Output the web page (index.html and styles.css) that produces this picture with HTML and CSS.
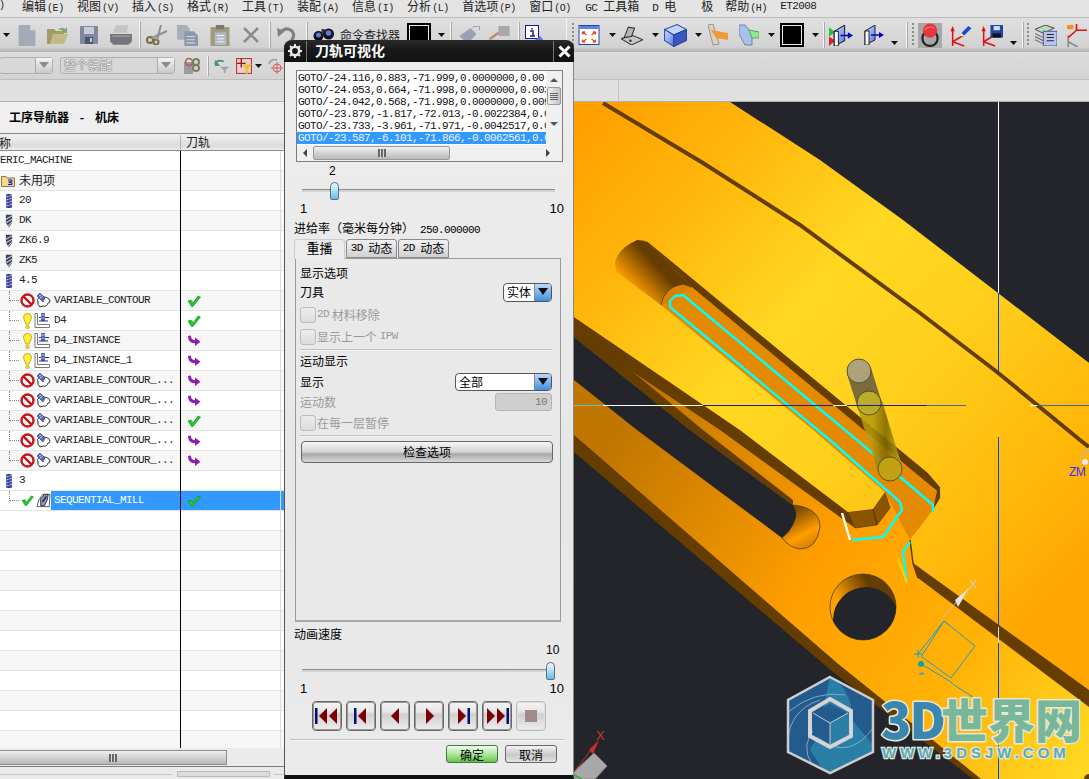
FILE: index.html
```html
<!DOCTYPE html>
<html lang="zh">
<head>
<meta charset="utf-8">
<title>刀轨可视化</title>
<link rel="stylesheet" href="styles.css">
</head>
<body>
<svg class="defs" aria-hidden="true">
  <defs>
    <linearGradient id="blueBox" x1="0" y1="0" x2="1" y2="1"><stop offset="0" stop-color="#cfe0ff"/><stop offset="1" stop-color="#5578d8"/></linearGradient>
    <symbol id="ico-no" viewBox="0 0 15 15"><circle cx="7.5" cy="7.5" r="6" fill="#fff" stroke="#c4161c" stroke-width="2.4"/><line x1="3.4" y1="3.4" x2="11.6" y2="11.6" stroke="#c4161c" stroke-width="2.4"/></symbol>
    <symbol id="ico-op" viewBox="0 0 15 15"><path d="M4 4 L9 4 Q14 5 14 8 Q14 10 12 10 Q11 14 7 13 L4 14 Q1 11 2 9 Q0 6 4 4Z" fill="#fff" stroke="#333" stroke-width="1"/><path d="M1 3 L4 0 L9 5 L7 9 Z" fill="#5566bb" stroke="#223377" stroke-width=".6"/><path d="M3 3 L5 2 M4 5 L6.500 3.500" stroke="#c8d0f0"/></symbol>
    <symbol id="ico-seq" viewBox="0 0 16 15"><path d="M1 14 L3 7 L7 1 L15 1 L14 14Z" fill="#fff" stroke="#555"/><path d="M5 13 L5 6 L9 1 L13 1 L12 7 L9 13Z" fill="#8a96c8" stroke="#334"/><path d="M7 9 L11 3" stroke="#223" stroke-width="1.500"/></symbol>
    <symbol id="ico-bulb" viewBox="0 0 9 16"><path d="M4.500 .5 Q8.500 .5 8.500 4 Q8.500 6 6 11 L3 11 Q.5 6 .5 4 Q.5 .5 4.500 .5Z" fill="#ffef3a" stroke="#b59a10" stroke-width=".8"/><circle cx="4.500" cy="14" r="1.800" fill="#f5dc20" stroke="#b59a10" stroke-width=".6"/></symbol>
    <symbol id="ico-prog" viewBox="0 0 16 15"><path d="M1 .5 H3.500 V11.500 H15.500 V14.500 H1Z" fill="#fff" stroke="#777"/><rect x="7" y="0" width="4" height="8" fill="#5260b8"/><path d="M5 4.500 H15 M5 8 H14" stroke="#203090"/><path d="M7 2 H11 M7 5 H11" stroke="#b8c0f0"/></symbol>
    <symbol id="ico-mill" viewBox="0 0 8 14"><rect x="1" y="0" width="6" height="14" rx="1" fill="#4a52b0"/><path d="M1 3 L7 1 M1 6 L7 4 M1 9 L7 7 M1 12 L7 10" stroke="#aab4ee"/><path d="M4 0 V14" stroke="#20286a" stroke-dasharray="2 1"/></symbol>
    <symbol id="ico-drill" viewBox="0 0 9 14"><path d="M1 0 H8 V9 L4.500 14 L1 9Z" fill="#3a3f55"/><path d="M1 5 L8 1 M1 9 L8 5 M3 13 L8 8" stroke="#c6cbe0" stroke-width="1.200"/></symbol>
    <symbol id="ico-folder" viewBox="0 0 14 12"><path d="M.5 1.500 H5 L6 3 H13.500 V11.500 H.5Z" fill="#f2dc8c" stroke="#8a7a3a"/><path d="M7 5 H11 V6.700 H8 V7.800 H11 V9.500 H7" fill="none" stroke="#1414e0" stroke-width="1"/></symbol>
    <symbol id="ico-check" viewBox="0 0 14 12"><path d="M1 6 L4 5 L6 8 L11 1 L13.500 2 L6 11.500 L4.500 11.500Z" fill="#22c82c" stroke="#0d8a1a" stroke-width=".6"/></symbol>
    <symbol id="ico-path" viewBox="0 0 14 12"><path d="M1 1 L3.800 .5 Q4 5 8 5.200 V2.500 L13.500 6.800 L8 11 V8.300 Q1 8.500 1 1Z" fill="#8a1fb0"/></symbol>
    <symbol id="ico-drop" viewBox="0 0 7 4"><path d="M0 0 H7 L3.500 4Z" fill="#111"/></symbol>
    <symbol id="ico-axes" viewBox="0 0 21 22"><g stroke="#e01010" stroke-width="1.500" fill="#e01010"><path d="M3 21 V5" fill="none"/><path d="M3 2 L5 7 H1Z" stroke="none"/><path d="M3 17 L13 11" fill="none"/><path d="M3 17 L14 21" fill="none"/></g></symbol>
  </defs>
</svg>

<div class="app">
  <nav class="menubar">
    <span class="menu"><span class="mn">)</span></span>
    <span class="menu">编辑<span class="mn">(E)</span></span>
    <span class="menu">视图<span class="mn">(V)</span></span>
    <span class="menu">插入<span class="mn">(S)</span></span>
    <span class="menu">格式<span class="mn">(R)</span></span>
    <span class="menu">工具<span class="mn">(T)</span></span>
    <span class="menu">装配<span class="mn">(A)</span></span>
    <span class="menu">信息<span class="mn">(I)</span></span>
    <span class="menu">分析<span class="mn">(L)</span></span>
    <span class="menu">首选项<span class="mn">(P)</span></span>
    <span class="menu">窗口<span class="mn">(O)</span></span>
    <span class="menu gap-gc"><span class="mono">GC</span><span class="m6">工具箱</span></span>
    <span class="menu gap-d"><span class="mono">D</span><span class="m6">电</span></span>
    <span class="menu gap-ji">极</span>
    <span class="menu">帮助<span class="mn">(H)</span></span>
    <span class="menu"><span class="mono">ET2008</span></span>
  </nav>

  <div class="toolbar">
    <div class="tb-left">
      <svg class="m3" width="7" height="4"><use href="#ico-drop"/></svg>
      <svg class="m8" width="18" height="21" viewBox="0 0 16 20"><path d="M0 0 H11 L16 5 V20 H0Z" fill="#a4aab8"/><path d="M11 0 L16 5 H11Z" fill="#d4d8e0"/></svg>
      <svg class="m11" width="21" height="20" viewBox="0 0 21 18"><path d="M0 3 H7 L9 5 H17 V18 H0Z" fill="#a49a68"/><path d="M3 18 L6 8 H21 L17 18Z" fill="#c4ba88"/><path d="M11 4 Q14 0 18 3 L20 1 V7 H14 L16 5 Q14 3 11 4Z" fill="#7fa878"/></svg>
      <svg class="m12" width="18" height="18" viewBox="0 0 18 18"><rect width="18" height="18" rx="1" fill="#8088a0"/><rect x="4" y="1" width="10" height="7" fill="#c8ccd4"/><rect x="5" y="11" width="8" height="7" fill="#50566a"/><rect x="10" y="12" width="2" height="4" fill="#c8ccd4"/></svg>
      <svg class="m11" width="24" height="20" viewBox="0 0 22 18"><path d="M6 0 H18 L16 7 H4Z" fill="#c4c4c8"/><path d="M1 8 H21 V15 L18 18 H4 L1 15Z" fill="#75757d"/><path d="M3 10 H19" stroke="#a8a8ae"/></svg>
      <span class="sep m6"></span>
      <svg class="m5" width="22" height="20" viewBox="0 0 22 20"><g fill="none" stroke="#7c6a42" stroke-width="2"><circle cx="4" cy="15" r="3"/><circle cx="10" cy="17" r="2.500"/></g><path d="M6 13 L21 6 M11 15 L15 0" stroke="#8a8f98" stroke-width="2"/></svg>
      <svg class="m9" width="21" height="21" viewBox="0 0 20 20"><path d="M0 0 H9 L12 3 V14 H0Z" fill="#a8aeba"/><path d="M7 6 H16 L20 10 V20 H7Z" fill="#8e96a8"/><path d="M9 11 H17 M9 14 H17 M9 17 H17" stroke="#d4d8e0"/></svg>
      <svg class="m12" width="20" height="21" viewBox="0 0 18 20"><rect y="2" width="18" height="18" fill="#a09a78"/><rect x="5" y="0" width="8" height="4" fill="#78787c"/><rect x="4" y="7" width="11" height="12" fill="#b4bac6"/><path d="M6 10 H13 M6 13 H13 M6 16 H13" stroke="#eceef2"/></svg>
      <svg class="m13" width="16" height="16" viewBox="0 0 16 16"><path d="M1 1 L15 15 M15 1 L1 15" stroke="#8a8a8a" stroke-width="2.500"/></svg>
      <span class="sep m10"></span>
      <svg class="m6" width="19" height="17" viewBox="0 0 19 17"><path d="M3 6 Q9 -1 15 4 Q19 9 13 16" fill="none" stroke="#808080" stroke-width="3"/><path d="M0 1 L8 4 L1 10Z" fill="#808080"/></svg>
      <span class="sep m10"></span>
      <svg class="m5" width="22" height="16" viewBox="0 0 21 16"><circle cx="5" cy="9" r="5" fill="#101018"/><circle cx="15" cy="7" r="5.500" fill="#101018"/><circle cx="5" cy="8" r="2.500" fill="#5c7ed8"/><circle cx="15" cy="6" r="2.800" fill="#5c7ed8"/><rect x="8" y="2" width="3" height="4" fill="#333"/></svg>
      <span class="toollabel m5">命令查找器</span>
      <span class="swatch m7"></span>
      <svg class="m7" width="7" height="4"><use href="#ico-drop"/></svg>
      <span class="sep m5"></span>
      <svg class="m7" width="21" height="18" viewBox="0 0 20 18"><path d="M0 10 L11 2 L17 8 L8 18Z" fill="#9aa0b8"/><path d="M13 1 L20 0 V4" fill="none" stroke="#90a0c0"/></svg>
      <svg class="m9" width="21" height="18" viewBox="0 0 18 16"><rect x="8" y="0" width="10" height="9" fill="#a8a8a8"/><path d="M0 12 L8 6" stroke="#c08a70" stroke-width="2"/><rect x="0" y="12" width="9" height="4" fill="#bdbdbd"/></svg>
      <span class="sep m8"></span>
      <svg class="m4" width="22" height="20" viewBox="0 0 20 20"><rect x=".5" y=".5" width="13" height="13" fill="#fff" stroke="#1616a0"/><path d="M7 3 V4.500 M5 6 H8 V11 H5 H10" stroke="#1616a0" stroke-width="1.500" fill="none"/><path d="M10 15 L15 11 L20 17 L15 20Z" fill="#5878d8"/></svg>
    </div>
    <div class="tb-right">
      <span class="grip m5"></span>
      <svg class="m4" width="22" height="20" viewBox="0 0 21 20"><rect x=".5" y=".5" width="20" height="19" fill="#fff" stroke="#2244b0"/><rect x="1" y="1" width="19" height="3" fill="#5a80e0"/><path d="M4 7 L8 10 M4 7 V9.500 M4 7 H6.500 M17 7 L13 10 M17 7 V9.500 M17 7 H14.500 M4 17 L8 14 M4 17 V14.500 M4 17 H6.500 M17 17 L13 14 M17 17 V14.500 M17 17 H14.500" stroke="#e84818" stroke-width="1.300" fill="none"/></svg>
      <svg class="m9" width="7" height="4"><use href="#ico-drop"/></svg>
      <svg class="m5" width="22" height="19" viewBox="0 0 21 18"><path d="M0 12 L11 9 L21 13 L10 18Z" fill="#c8c8c8" stroke="#333"/><path d="M3 11 L7 1 L13 2 L10 10Z" fill="#b4b4b4" stroke="#333"/><circle cx="9" cy="14" r="1.200" fill="#333"/></svg>
      <svg class="m9" width="7" height="4"><use href="#ico-drop"/></svg>
      <svg class="m5" width="23" height="23" viewBox="0 0 21 21"><path d="M.5 5 L12 .5 L20.500 5 L9 10Z" fill="#c4d6fa" stroke="#3050b8"/><path d="M.5 5 L9 10 V20.500 L.5 15Z" fill="url(#blueBox)" stroke="#3050b8"/><path d="M9 10 L20.500 5 V15 L9 20.500Z" fill="#3a58c0" stroke="#2a40a0"/></svg>
      <svg class="m8" width="7" height="4"><use href="#ico-drop"/></svg>
      <svg class="m6" width="20" height="22" viewBox="0 0 20 22"><path d="M0 1 L5 0 L11 20 L5 21Z" fill="#d8d2c0" stroke="#9a9484"/><path d="M3 6 L20 9 V16 L8 14Z" fill="#f09a38"/></svg>
      <svg class="m11" width="20" height="22" viewBox="0 0 20 20"><path d="M0 0 H6 L13 8 V20 L6 20 L0 9Z" fill="#a8c0ec" stroke="#7080a0"/><path d="M10 5 L20 7 V13 L13 13Z" fill="#8eea8e" stroke="#60a060"/></svg>
      <svg class="m9" width="7" height="4"><use href="#ico-drop"/></svg>
      <span class="swatch m5"></span>
      <svg class="m8" width="7" height="4"><use href="#ico-drop"/></svg>
      <span class="sep m4"></span>
      <svg class="m4" width="24" height="21" viewBox="0 0 23 20"><path d="M0 2 L6 7 L0 11Z" fill="#20c040"/><path d="M0 11 L6 15 L0 20Z" fill="#e02020"/><path d="M5 6 L15 0 V15 L5 20Z" fill="url(#blueBox)" stroke="#223"/><rect x="5" y="6" width="4" height="14" fill="#fff" stroke="#223"/><path d="M11 10 H20" stroke="#0000c8" stroke-width="1.500"/><path d="M23 10 L18 7 V13Z" fill="#0000c8"/></svg>
      <svg class="m11" width="21" height="20" viewBox="0 0 21 20"><path d="M1 6 L11 0 V15 L1 20Z" fill="url(#blueBox)" stroke="#223"/><rect x="1" y="6" width="4" height="14" fill="#fff" stroke="#223"/><path d="M7 10 H16" stroke="#0000c8" stroke-width="1.500"/><path d="M20 10 L15 7 V13Z" fill="#0000c8"/></svg>
      <svg class="m6 drop-low" width="7" height="4"><use href="#ico-drop"/></svg>
      <span class="sep m8"></span>
      <span class="grip m4"></span>
      <span class="active m4"><svg width="18" height="24" viewBox="0 0 16 22"><ellipse cx="8" cy="14" rx="7" ry="7" fill="none" stroke="#222" stroke-width="2"/><circle cx="8" cy="7" r="6.500" fill="#e8363e"/><path d="M3 6 Q8 2 12 5" fill="none" stroke="#f58888"/></svg></span>
      <svg class="m7" width="23" height="23" viewBox="0 0 21 22"><use href="#ico-axes"/><path d="M11 9 L18 2 L21 4 L14 11Z" fill="#2244d0"/><path d="M10 8 L14 11 L11 12Z" fill="#f4f0a0"/></svg>
      <svg class="m8" width="23" height="23" viewBox="0 0 22 22"><use href="#ico-axes"/><rect x="10" y="1" width="12" height="12" fill="#2244a0"/><rect x="13" y="2" width="6" height="4" fill="#cfe0ff"/><rect x="12" y="9" width="8" height="4" fill="#111"/></svg>
      <svg class="m7 drop-low" width="7" height="4"><use href="#ico-drop"/></svg>
      <span class="sep m5"></span>
      <span class="grip m3"></span>
      <svg class="m6" width="22" height="21" viewBox="0 0 21 20"><path d="M0 4 L10 0 L18 3 L8 8Z" fill="#b8e0b0" stroke="#556"/><path d="M0 8 L8 12 M0 11 L8 15 M0 14 L8 18" stroke="#667" fill="none"/><rect x="8" y="6" width="13" height="14" fill="#b8c4ea" stroke="#5060a0"/><path d="M11 9 H18 M11 12 H18 M11 15 H18" stroke="#223" /><path d="M10 9 H11 M10 12 H11 M10 15 H11" stroke="#f0c020"/></svg>
      <svg class="m8" width="22" height="23" viewBox="0 0 21 22"><path d="M3 22 V11 M3 17 L12 22" stroke="#888" stroke-width="1.500"/><path d="M3 13 L11 6 M11 6 H21 M11 6 V0" stroke="#e01010" stroke-width="1.500" fill="none"/><rect x="2" y="1" width="6" height="4" fill="#f09020"/></svg>
    </div>
  </div>

  <div class="toolbar2">
    <span class="combo combo-a"><span class="combo-arrow"></span></span>
    <span class="combo combo-b"><span class="combo-text">整个装配</span><span class="combo-arrow"></span></span>
    <svg class="m9" width="16" height="17" viewBox="0 0 16 17"><rect x="0" y="5" width="9" height="12" fill="#9a9aa0"/><circle cx="5" cy="5" r="3.500" fill="none" stroke="#b05a50" stroke-width="1.500"/><circle cx="12" cy="5" r="3" fill="none" stroke="#807868" stroke-width="2"/><circle cx="12" cy="11" r="3" fill="none" stroke="#807868" stroke-width="2"/></svg>
    <span class="sep m7 short"></span>
    <svg class="m5" width="15" height="17" viewBox="0 0 17 17"><path d="M1 7 Q4 1 11 4" fill="none" stroke="#4f8f70" stroke-width="2"/><path d="M1 2 V9 H7Z" fill="#4f8f70"/><path d="M7 10 H17 L13 14 V17 H11 V14Z" fill="#a0a4a8"/></svg>
    <svg class="m7" width="16" height="16" viewBox="0 0 15 15"><rect x=".5" y=".5" width="14" height="14" fill="#e4d0d0" stroke="#d03030"/><path d="M5 1 V9 M1 5 H9" stroke="#901818" stroke-width="1.300"/><path d="M6 6 H15 L11 10 V15 H9 V10Z" fill="#f0c020"/></svg>
    <svg class="m3" width="7" height="4"><use href="#ico-drop"/></svg>
    <svg class="m6" width="15" height="16" viewBox="0 0 15 16"><path d="M1 6 Q3 0 9 2" fill="none" stroke="#9a9a9a" stroke-width="1.500"/><circle cx="9" cy="10" r="4" fill="none" stroke="#d06060"/><path d="M9 4 V16 M3 10 H15" stroke="#d06060"/></svg>
  </div>

  <div class="band"><span class="band-cell"></span></div>

  <div class="workspace">
    <section class="navigator">
      <h2 class="nav-title">工序导航器 - 机床</h2>
      <div class="nav-head">
        <span class="head-name">称</span>
        <span class="head-path">刀轨</span>
      </div>
      <div class="rows">
        <div class="row"><span class="name mono root">GENERIC_MACHINE</span></div>
        <div class="row"><span class="name"><svg class="ico-l1f" width="14" height="12"><use href="#ico-folder"/></svg><span class="cjk">未用项</span></span></div>
        <div class="row"><span class="name"><svg class="ico-l1" width="8" height="14"><use href="#ico-mill"/></svg><span class="mono">20</span></span></div>
        <div class="row"><span class="name"><svg class="ico-l1" width="8" height="14"><use href="#ico-drill"/></svg><span class="mono">DK</span></span></div>
        <div class="row"><span class="name"><svg class="ico-l1" width="8" height="14"><use href="#ico-drill"/></svg><span class="mono">ZK6.9</span></span></div>
        <div class="row"><span class="name"><svg class="ico-l1" width="8" height="14"><use href="#ico-drill"/></svg><span class="mono">ZK5</span></span></div>
        <div class="row"><span class="name"><svg class="ico-l1" width="8" height="14"><use href="#ico-mill"/></svg><span class="mono">4.5</span></span></div>
        <div class="row"><span class="name"><i class="twig"></i><svg class="ico-st" width="15" height="15"><use href="#ico-no"/></svg><svg class="ico-op" width="15" height="15"><use href="#ico-op"/></svg><span class="mono">VARIABLE_CONTOUR</span></span><span class="path"><svg width="14" height="12"><use href="#ico-check"/></svg></span></div>
        <div class="row"><span class="name"><i class="twig"></i><svg class="ico-bulb" width="9" height="16"><use href="#ico-bulb"/></svg><svg class="ico-prog" width="16" height="15"><use href="#ico-prog"/></svg><span class="mono">D4</span></span><span class="path"><svg width="14" height="12"><use href="#ico-check"/></svg></span></div>
        <div class="row"><span class="name"><i class="twig"></i><svg class="ico-bulb" width="9" height="16"><use href="#ico-bulb"/></svg><svg class="ico-prog" width="16" height="15"><use href="#ico-prog"/></svg><span class="mono">D4_INSTANCE</span></span><span class="path"><svg width="14" height="12"><use href="#ico-path"/></svg></span></div>
        <div class="row"><span class="name"><i class="twig"></i><svg class="ico-bulb" width="9" height="16"><use href="#ico-bulb"/></svg><svg class="ico-prog" width="16" height="15"><use href="#ico-prog"/></svg><span class="mono">D4_INSTANCE_1</span></span><span class="path"><svg width="14" height="12"><use href="#ico-path"/></svg></span></div>
        <div class="row"><span class="name"><i class="twig"></i><svg class="ico-st" width="15" height="15"><use href="#ico-no"/></svg><svg class="ico-op" width="15" height="15"><use href="#ico-op"/></svg><span class="mono">VARIABLE_CONTOUR_...</span></span><span class="path"><svg width="14" height="12"><use href="#ico-path"/></svg></span></div>
        <div class="row"><span class="name"><i class="twig"></i><svg class="ico-st" width="15" height="15"><use href="#ico-no"/></svg><svg class="ico-op" width="15" height="15"><use href="#ico-op"/></svg><span class="mono">VARIABLE_CONTOUR_...</span></span><span class="path"><svg width="14" height="12"><use href="#ico-path"/></svg></span></div>
        <div class="row"><span class="name"><i class="twig"></i><svg class="ico-st" width="15" height="15"><use href="#ico-no"/></svg><svg class="ico-op" width="15" height="15"><use href="#ico-op"/></svg><span class="mono">VARIABLE_CONTOUR_...</span></span><span class="path"><svg width="14" height="12"><use href="#ico-check"/></svg></span></div>
        <div class="row"><span class="name"><i class="twig"></i><svg class="ico-st" width="15" height="15"><use href="#ico-no"/></svg><svg class="ico-op" width="15" height="15"><use href="#ico-op"/></svg><span class="mono">VARIABLE_CONTOUR_...</span></span><span class="path"><svg width="14" height="12"><use href="#ico-path"/></svg></span></div>
        <div class="row"><span class="name"><i class="twig"></i><svg class="ico-st" width="15" height="15"><use href="#ico-no"/></svg><svg class="ico-op" width="15" height="15"><use href="#ico-op"/></svg><span class="mono">VARIABLE_CONTOUR_...</span></span><span class="path"><svg width="14" height="12"><use href="#ico-path"/></svg></span></div>
        <div class="row"><span class="name"><svg class="ico-l1" width="8" height="14"><use href="#ico-mill"/></svg><span class="mono">3</span></span></div>
        <div class="row selected"><span class="name"><i class="twig"></i><svg class="ico-stc" width="13" height="11"><use href="#ico-check"/></svg><svg class="ico-seq" width="15" height="15"><use href="#ico-seq"/></svg><span class="mono sel-text">SEQUENTIAL_MILL</span></span><span class="path"><svg width="14" height="12"><use href="#ico-check"/></svg></span></div>
        <div class="row"></div><div class="row"></div><div class="row"></div><div class="row"></div>
        <div class="row"></div><div class="row"></div><div class="row"></div><div class="row"></div>
        <div class="row"></div><div class="row"></div><div class="row"></div><div class="row"></div>
      </div>
      <div class="hscroll"><span class="hthumb"><i class="gripper"></i></span></div>
      <div class="statusbar"><span class="status-seg status-a"></span><span class="status-seg status-b"></span><span class="status-seg status-c"></span></div>
    </section>

    <div class="viewport">
      <svg class="scene" width="804" height="677" viewBox="285 102 804 677">
        <defs>
          <linearGradient id="faceA" gradientUnits="userSpaceOnUse" x1="600" y1="110" x2="1089" y2="560">
            <stop offset="0" stop-color="#ffa000"/><stop offset=".2" stop-color="#ffb80c"/><stop offset=".42" stop-color="#ffd822"/><stop offset=".58" stop-color="#ffd21e"/><stop offset=".85" stop-color="#ffb80a"/><stop offset="1" stop-color="#ffa600"/>
          </linearGradient>
          <linearGradient id="faceB" gradientUnits="userSpaceOnUse" x1="590" y1="480" x2="1075" y2="780">
            <stop offset="0" stop-color="#c07600"/><stop offset=".42" stop-color="#ff9e00"/><stop offset=".72" stop-color="#ffb206"/><stop offset="1" stop-color="#ffd822"/>
          </linearGradient>
          <linearGradient id="cyl" gradientUnits="userSpaceOnUse" x1="620" y1="275" x2="652" y2="245">
            <stop offset="0" stop-color="#ff9e00"/><stop offset=".75" stop-color="#663d00"/>
          </linearGradient>
          <linearGradient id="slotEnd" gradientUnits="userSpaceOnUse" x1="795" y1="510" x2="815" y2="548">
            <stop offset="0" stop-color="#7a4a00"/><stop offset=".6" stop-color="#ff9e00"/><stop offset="1" stop-color="#c87a00"/>
          </linearGradient>
          <linearGradient id="holeWall" gradientUnits="userSpaceOnUse" x1="838" y1="600" x2="880" y2="575">
            <stop offset="0" stop-color="#ffa000"/><stop offset=".7" stop-color="#663d00"/>
          </linearGradient>
          <linearGradient id="lowTool" gradientUnits="userSpaceOnUse" x1="872" y1="420" x2="900" y2="420">
            <stop offset="0" stop-color="#b89a10"/><stop offset=".5" stop-color="#7a6400"/><stop offset="1" stop-color="#c4a618"/>
          </linearGradient>
          <clipPath id="holeClip"><circle cx="863" cy="607" r="33"/></clipPath>
          <clipPath id="hexClip"><path d="M830 677 L873 700 V752 L830 773 L788 752 V700Z"/></clipPath>
        </defs>
        <rect x="285" y="102" width="804" height="677" fill="#24252a"/>
        <path d="M574 435 L837 663 L981 779 H973 L833 672 L574 452Z" fill="#663d00"/>
        <path d="M560 102 H730 L1089 363 V779 H981 L837 663 L574 435 L560 425Z" fill="url(#faceB)"/>
        <path d="M574 333 L610 353 L703 430 L793 500 V505 L690 430 L574 337Z" fill="#663d00"/>
        <path d="M793 505 Q820 508 820 527 Q817 549 800 549 Q790 548 782 538Z" fill="url(#slotEnd)" stroke="#3a3020" stroke-width=".7"/>
        <path d="M574 337 L690 430 L793 505 Q798 514 795 520 Q792 530 782 538 L637 430 L574 380Z" fill="#24252a"/>
        <path d="M574 317 L740 430 L848 512 L855 528 L720 430 L574 333Z" fill="#663d00"/>
        <path d="M848 512 L855 528 L877 525 L890 508 L885 492 L873 509Z" fill="#8a5500" stroke="#4a3000" stroke-width=".6"/>
        <path d="M873 509 L877 525" stroke="#4a3000"/>
        <path d="M660 306 L692 287 L868 430 L940 495 L933 510 L910 540 L885 492Z" fill="#e48a00"/>
        <path d="M692 287 L925 481 L937 491 L933 510 L940 498 L940 487 L928 473 L648 242Z" fill="#663d00"/>
        <path d="M615 263 Q618 248 637 240 L648 242 L692 287 Q670 285 661 305 L617 272Z" fill="url(#cyl)"/>
        <path d="M661 305 Q664 287 683 284 L692 287" fill="#d88200" stroke="#3a3020" stroke-width=".7"/>
        <path d="M574 102 H730 L820 160 L903 220 L998 293 L1089 363 V690 L913 563 L910 540 L933 510 L941 498 L940 487 L928 473 L648 242 Q642 239 637 240 Q618 248 615 263 L617 272 L661 305 L813 430 L885 492 L873 509 L848 512 L740 430 L574 317Z" fill="url(#faceA)"/>
        <path d="M603 103 L703 163 L800 225 L920 313 L997 372 L1080 440 L1089 447" fill="none" stroke="#663d00" stroke-width="4"/>
        <path d="M913 563 L1089 690 V707 L918 578Z" fill="#663d00"/>
        <path d="M910 540 L913 563 L918 578" fill="none" stroke="#663d00" stroke-width="1.500"/>
        <circle cx="1089" cy="779" r="5" fill="#663d00"/>

        <circle cx="863" cy="607" r="33" fill="url(#holeWall)" stroke="#3a3020" stroke-width=".7"/>
        <circle cx="866" cy="620" r="33" fill="#24252a" clip-path="url(#holeClip)"/>

        <g fill="none" stroke-linejoin="round">
          <path d="M670 307 V301 L675 296 L683 295 L857 440 L933 505 V512 M670 307 L830 440 L900 502 L902 510 L883 537 L852 540" stroke="#00ffff" stroke-width="2.400"/>
          <path d="M842 513 L850 540" stroke="#fff" stroke-width="2.400"/>
          <path d="M910 542 L903 552 L907 583" stroke="#00ffff" stroke-width="2.400"/>
          <path d="M898 558 L907 583" stroke="#ffcc00" stroke-width="2.400"/>
        </g>

        <path d="M847 374 L871 368 L882 403 L858 409Z" fill="#7c6c3a"/>
        <path d="M858 409 L882 401 L902 466 L878 472Z" fill="url(#lowTool)" opacity=".85"/>
        <circle cx="890" cy="469" r="12" fill="#c0a214" stroke="#4a4020" stroke-width=".8"/>
        <circle cx="869" cy="403" r="12" fill="#b9ad28" stroke="#3c3c30" stroke-width=".8"/>
        <circle cx="859" cy="371" r="12" fill="#ada27a" stroke="#3c3c30" stroke-width=".8"/>

        <g stroke-width="1">
          <path d="M574 405.500 H603" stroke="#5ac0c0"/>
          <path d="M603 405.500 H703" stroke="#fff"/>
          <path d="M703 405.500 H927" stroke="#221a90"/>
          <path d="M833 405.500 H847" stroke="#f4f4e0"/>
          <path d="M927 405.500 H966" stroke="#3a6aa0"/>
          <path d="M1037 405.500 H1089" stroke="#3a6aa0"/>
          <path d="M1030 405.500 H1037" stroke="#fff"/>
          <path d="M998.500 102 V293" stroke="#fff"/>
          <path d="M998.500 293 V373" stroke="#0a40ff"/>
          <path d="M998.500 437 V627" stroke="#0a40ff"/>
          <path d="M998.500 627 V643" stroke="#d8e8c0"/>
          <path d="M998.500 643 V779" stroke="#0a40ff"/>
        </g>

        <g fill="none" stroke="#1f9ccc" stroke-width="1">
          <path d="M918 654 L944 621 L975 646 L951 678 L922 657"/>
          <path d="M921 657 L944 621 L949 625 M923 665 L951 682 L954 685 L973 697"/>
          <path d="M918 650 V658 M914 654 H922"/>
          <path d="M921 672 L924 674 H919"/>
        </g>
        <circle cx="921" cy="664" r="3" fill="#10a0a8"/>
        <path d="M942 618 L960 598" stroke="#c8c8c8" stroke-width="1"/>
        <path d="M969 588 L958 607 L955 600Z" fill="#e4e4e4"/>
        <text class="wcs-x" x="969" y="589">X</text>
        <text class="zm" x="1069" y="476">ZM</text>
        <path d="M1088 448 L1080 456 L1085 462 H1089 M1089 450 L1085 456" fill="none" stroke="#b0b8c8"/>
        <circle cx="1085" cy="462" r="3" fill="#e8e8f0"/>

        <path d="M574 779 V772 L594 753 L607 766 L595 779Z" fill="#a8a8a8" stroke="#888"/>
        <path d="M574 772 L594 746" stroke="#c83030" stroke-width="1"/>
        <path d="M599 740 L589 750 L593 754Z" fill="#c83030"/>
        <text class="triad-x" x="596" y="740">X</text>
        <path d="M574 775 L582 779" stroke="#30b030" stroke-width="1.500"/>

        <g class="logo">
          <path d="M830 677 L873 700 V752 L830 773 L788 752 V700Z" fill="#245b8e"/>
          <g clip-path="url(#hexClip)">
            <path d="M830 677 Q853 690 852 720 L873 745 V760 L830 780 L810 750 L818 735 Z" fill="#2a7fa6"/>
            <path d="M788 712 Q815 690 845 695 M788 740 Q790 710 820 700 M812 765 Q800 745 815 728 M873 728 Q850 760 820 740" fill="none" stroke="#9ab8cc" stroke-width=".8"/>
          </g>
          <path d="M830 677 L873 700 V752 L830 773 L788 752 V700Z" fill="none" stroke="#cdcdcd" stroke-width="2.500"/>
          <path d="M830 699 L851 711 V736 L830 747 L810 736 V711Z" fill="none" stroke="#d4d4d4" stroke-width="4"/>
          <path d="M813 713 L830 704 L848 713 L830 723Z" fill="#245b8e"/>
          <path d="M813 713 L830 723 V744 L813 734Z" fill="#245b8e"/>
          <path d="M830 723 L848 713 V734 L830 744Z" fill="#2a7fa6"/>
          <path d="M813 713 L830 723 L848 713 M830 723 V744" fill="none" stroke="#c4c8cc" stroke-width="1"/>
          <text class="wm-big wm-3d" x="881" y="739">3D</text>
          <text class="wm-big wm-cn" x="941" y="738">世界网</text>
          <text class="wm-url" x="882" y="758">WWW.3DSJW.COM</text>
        </g>
      </svg>
    </div>
  </div>
</div>

<section class="dialog">
  <header class="titlebar">
    <svg class="gear" width="14" height="14" viewBox="0 0 14 14"><circle cx="7" cy="7" r="4.200" fill="none" stroke="#e8e8e8" stroke-width="2.600"/><path d="M7 0 V2 M7 12 V14 M0 7 H2 M12 7 H14 M2 2 L3.500 3.500 M10.500 10.500 L12 12 M2 12 L3.500 10.500 M10.500 3.500 L12 2" stroke="#e8e8e8" stroke-width="2"/></svg>
    <h1 class="dlg-title">刀轨可视化</h1>
    <button class="close" aria-label="关闭"><svg width="13" height="13" viewBox="0 0 13 13"><path d="M1.500 1.500 L11.500 11.500 M11.500 1.500 L1.500 11.500" stroke="#fff" stroke-width="3"/></svg></button>
  </header>

  <div class="listbox">
    <div class="lines mono">
      <div class="line">GOTO/-24.116,0.883,-71.999,0.0000000,0.00</div>
      <div class="line">GOTO/-24.053,0.664,-71.998,0.0000000,0.003</div>
      <div class="line">GOTO/-24.042,0.568,-71.998,0.0000000,0.009</div>
      <div class="line">GOTO/-23.879,-1.817,-72.013,-0.0022384,0.0</div>
      <div class="line">GOTO/-23.733,-3.961,-71.971,-0.0042517,0.0</div>
      <div class="line line-sel">GOTO/-23.587,-6.101,-71.866,-0.0062561,0.0</div>
    </div>
    <div class="vbar">
      <span class="arrow-up"></span>
      <span class="vthumb"><i></i><i></i><i></i><i></i></span>
      <span class="arrow-down"></span>
    </div>
    <div class="hbar">
      <span class="arrow-left"></span>
      <span class="hbar-thumb"><i class="gripper"></i></span>
      <span class="arrow-right"></span>
    </div>
  </div>

  <div class="s-val s-val-2">2</div>
  <div class="track"><span class="knob knob-a"></span></div>
  <div class="s-range"><span>1</span><span>10</span></div>
  <div class="feed">进给率（毫米每分钟）<span class="mono feed-num">250.000000</span></div>

  <div class="tabs">
    <span class="tab tab-on">重播</span>
    <span class="tab"><span class="mono">3D</span> 动态</span>
    <span class="tab"><span class="mono">2D</span> 动态</span>
  </div>
  <div class="tabpanel">
    <div class="p-row p-h1">显示选项</div>
    <div class="p-row p-sel"><span>刀具</span><span class="select sel-a">实体<i class="sel-btn"></i></span></div>
    <div class="p-row p-chk off"><i class="cb"></i><span class="mono">2D</span>&nbsp;材料移除</div>
    <div class="p-row p-chk off"><i class="cb"></i>显示上一个&nbsp;<span class="mono">IPW</span></div>
    <hr class="rule">
    <div class="p-row p-h2">运动显示</div>
    <div class="p-row p-sel2"><span>显示</span><span class="select sel-b">全部<i class="sel-btn"></i></span></div>
    <div class="p-row p-num off"><span>运动数</span><span class="numbox mono">10</span></div>
    <div class="p-row p-chk off"><i class="cb"></i>在每一层暂停</div>
    <hr class="rule">
    <button class="wide-btn">检查选项</button>
  </div>

  <div class="speed-label">动画速度</div>
  <div class="s-val s-val-10">10</div>
  <div class="track"><span class="knob knob-b"></span></div>
  <div class="s-range"><span>1</span><span>10</span></div>

  <div class="player">
    <button class="pbtn"><svg width="24" height="18" viewBox="0 0 24 18"><rect x="0" y="1" width="2.500" height="16" fill="#00107a"/><path d="M4 9 L12 1 V17Z M14 9 L22 1 V17Z" fill="#7c0000"/></svg></button>
    <button class="pbtn"><svg width="14" height="18" viewBox="0 0 14 18"><rect x="0" y="1" width="2.500" height="16" fill="#00107a"/><path d="M4 9 L12 1 V17Z" fill="#7c0000"/></svg></button>
    <button class="pbtn"><svg width="9" height="18" viewBox="0 0 9 18"><path d="M0 9 L8 1 V17Z" fill="#7c0000"/></svg></button>
    <button class="pbtn"><svg width="9" height="18" viewBox="0 0 9 18"><path d="M9 9 L1 1 V17Z" fill="#7c0000"/></svg></button>
    <button class="pbtn"><svg width="14" height="18" viewBox="0 0 14 18"><path d="M10 9 L2 1 V17Z" fill="#7c0000"/><rect x="11.500" y="1" width="2.500" height="16" fill="#00107a"/></svg></button>
    <button class="pbtn"><svg width="24" height="18" viewBox="0 0 24 18"><path d="M10 9 L2 1 V17Z M20 9 L12 1 V17Z" fill="#7c0000"/><rect x="21.500" y="1" width="2.500" height="16" fill="#00107a"/></svg></button>
    <button class="pbtn pbtn-off"><svg width="12" height="12" viewBox="0 0 12 12"><rect width="12" height="12" fill="#a08a8a"/></svg></button>
  </div>
  <hr class="rule-b">
  <div class="actions">
    <button class="act act-ok">确定</button>
    <button class="act">取消</button>
  </div>
</section>
</body>
</html>
```

FILE: styles.css
```css
* { box-sizing: border-box; }
html, body { margin: 0; padding: 0; }
body {
  position: relative;
  width: 1089px;
  height: 779px;
  overflow: hidden;
  background: #e2e2e2;
  color: #000;
  font: 12px/1.2 "Noto Sans CJK SC", "Liberation Sans", sans-serif;
}
svg { display: block; flex: none; }
.defs { position: absolute; width: 0; height: 0; }
h1, h2 { margin: 0; font-size: inherit; }
button { font: inherit; color: inherit; padding: 0; margin: 0; }
hr { margin: 0; border: 0; }

.mono {
  font-family: "Liberation Mono", "DejaVu Sans Mono", monospace;
  font-size: 11px;
  letter-spacing: -.6px;
}

.m2 { margin-left: 2px; } .m3 { margin-left: 3px; } .m4 { margin-left: 4px; }
.m5 { margin-left: 5px; } .m6 { margin-left: 6px; } .m7 { margin-left: 7px; }
.m8 { margin-left: 8px; } .m9 { margin-left: 9px; } .m10 { margin-left: 10px; }
.m11 { margin-left: 11px; } .m12 { margin-left: 12px; } .m13 { margin-left: 13px; }

.app { display: flex; flex-direction: column; width: 1089px; height: 779px; }

/* menu */
.menubar {
  display: flex;
  align-items: flex-start;
  flex: none;
  height: 18px;
  gap: 12px;
  padding-top: 0;
  margin-left: -1px;
  background: #e4e4e4;
  border-bottom: 1px solid #bcbcbc;
  line-height: 12px;
  white-space: nowrap;
  color: #222;
}
.menu { display: flex; flex: none; align-items: baseline; }
.mn {
  display: block;
  width: 19px;
  padding-left: 1px;
  font: 10px/12px "Liberation Mono", monospace;
  letter-spacing: -.4px;
  white-space: nowrap;
}
.menu:first-child .mn { width: 11px; padding-left: 0; }
.gap-gc { margin-left: 1px; }
.gap-d { margin-left: 1px; }
.gap-ji { margin-left: 13px; }

/* toolbars */
.toolbar {
  display: flex;
  flex: none;
  height: 34px;
  background: linear-gradient(#e0e0e0, #d2d2d2 85%, #b0b0b0);
}
.tb-left { display: flex; align-items: center; width: 566px; flex: none; }
.tb-right {
  display: flex;
  align-items: center;
  flex: none;
  border-left: 1px solid #f4f4f4;
}
.sep { display: block; flex: none; height: 26px; background: #f4f4f4; border-right: 1px solid #a8a8a8; width: 2px; }
.sep.short { height: 20px; }
.grip {
  display: block;
  flex: none;
  width: 2px;
  height: 24px;
  background: repeating-linear-gradient(#8c8c8c 0 2px, transparent 2px 4px);
}
.drop-low { align-self: flex-end; margin-bottom: 7px; }
.active { display: block; flex: none; width: 24px; height: 25px; padding: 0 3px; background: #a8a8a8; }
.toollabel { display: block; flex: none; color: #222; white-space: nowrap; width: 60px; }
.swatch { display: block; flex: none; width: 24px; height: 24px; background: #000; border: 2px solid #000; outline: 1px solid #e8e8e8; outline-offset: -3px; }

.toolbar2 {
  display: flex;
  align-items: center;
  flex: none;
  height: 28px;
  background: linear-gradient(#dcdcdc, #d4d4d4);
  border-bottom: 1px solid #bdbdbd;
}
.combo {
  display: flex;
  flex: none;
  align-items: center;
  justify-content: space-between;
  height: 17px;
  border: 1px solid #b0b0b0;
  border-radius: 3px;
  background: #d8d8d8;
  padding-left: 3px;
}
.combo-a { width: 54px; margin-left: -1px; justify-content: flex-end; padding-left: 0; }
.combo-b { width: 115px; margin-left: 7px; }
.combo-text { color: #eee; font-size: 12px; text-shadow: 0 0 1px #555, 0 0 1px #555; }
.combo-arrow {
  display: block;
  width: 17px;
  height: 15px;
  border-left: 1px solid #aaa;
  background: linear-gradient(#f4f4f4, #c8c8c8);
  position: relative;
}
.combo-arrow::after {
  content: "";
  position: absolute;
  left: 3px;
  top: 4px;
  border: 5px solid transparent;
  border-top: 6px solid #8c8c8c;
  border-bottom: 0;
}

.band {
  flex: none;
  height: 22px;
  display: flex;
  justify-content: flex-end;
  background: #e0e0e0;
  border-bottom: 1px solid #b0b0b0;
}
.band-cell { display: block; width: 471px; border-left: 1px solid #c4c4c4; }

.workspace { display: flex; flex: 1; min-height: 0; }

/* navigator */
.navigator {
  display: flex;
  flex-direction: column;
  flex: none;
  width: 285px;
  overflow: hidden;
  background: #ececec;
  border-right: 1px solid #7c7c7c;
}
.nav-title {
  flex: none;
  height: 31px;
  padding: 7px 0 0 9px;
  font-weight: 700;
  font-size: 12px;
  line-height: 16px;
  background: #efefef;
  word-spacing: 8px;
}
.nav-head {
  display: flex;
  flex: none;
  height: 18px;
  align-items: center;
  background: linear-gradient(#f2f2f2, #dcdcdc 75%, #ededed);
  border-top: 1px solid #8a8a8a;
  border-bottom: 1px solid #8a8a8a;
  color: #222;
}
.head-name { width: 182px; margin-left: -1px; border-right: 1px solid #b4b4b4; line-height: 15px; }
.head-path { padding-left: 5px; }

.rows { position: relative; flex: none; height: 597px; overflow: hidden; background: #fff; }
.rows::after {
  content: "";
  position: absolute;
  left: 180px; top: 0; bottom: 0;
  width: 1px;
  background: #000;
}
.rows::before {
  content: "";
  position: absolute;
  left: 280px; top: 0; bottom: 0;
  width: 1px;
  background: #dcdcdc;
}
.row {
  display: flex;
  height: 20px;
  align-items: center;
  background: #fff;
  border-bottom: 1px solid #e4e4e4;
  color: #222;
}
.row:nth-child(even) { background: #f6f6f6; }
.name { display: flex; align-items: center; width: 181px; height: 100%; flex: none; white-space: nowrap; overflow: hidden; }
.root { margin-left: -18px; width: 199px; }
.path { display: block; padding-left: 6px; }
.cjk { font-size: 12px; }
.ico-l1 { margin: 0 6px 0 5px; }
.ico-l1f { margin: 0 4px 0 1px; }
.twig {
  display: block;
  flex: none;
  width: 10px;
  height: 10px;
  margin: 0 0 10px 9px;
  border-left: 1px dotted #888;
  border-bottom: 1px dotted #888;
}
.ico-st { margin-left: 1px; }
.ico-stc { margin: 0 2px; }
.ico-op { margin: 0 3px 0 1px; }
.ico-bulb { margin: 0 0 0 4px; }
.ico-prog { margin: 0 4px 0 2px; }
.selected { background: transparent !important; }
.selected .path { background: #3399ff; flex: 1; height: 100%; display: flex; align-items: center; }
.sel-text { background: #3399ff; color: #fff; align-self: stretch; flex: 1; line-height: 19px; padding-left: 3px; }

.hscroll { flex: none; height: 16px; margin-top: 2px; background: #ebebeb; }
.hthumb {
  display: flex;
  justify-content: center;
  align-items: center;
  width: 227px;
  height: 15px;
  border: 1px solid #8e8e8e;
  border-left: 0;
  background: linear-gradient(#eeeeee, #d4d4d4 50%, #b8b8b8);
}
.gripper {
  display: block;
  width: 8px;
  height: 8px;
  background: repeating-linear-gradient(90deg, #666 0 2px, #ddd 2px 3px);
}
.statusbar {
  flex: 1;
  display: flex;
  align-items: center;
  background: #eaeaea;
  border-top: 1px solid #7c7c7c;
  padding-top: 2px;
}
.status-seg { display: block; height: 1px; background: #c8c8c8; }
.status-a { width: 172px; }
.status-b { width: 93px; height: 6px; margin-left: 5px; border: 1px solid #bbb; background: #dedede; }
.status-c { width: 10px; margin-left: 4px; }

.viewport { flex: 1; min-width: 0; overflow: hidden; background: #24252a; }
.wcs-x { font: 13px "Liberation Sans", sans-serif; fill: #d8c8b0; }
.triad-x { font: 13px "Liberation Sans", sans-serif; fill: #c83a3a; }
.zm { font: 12px "Liberation Sans", sans-serif; fill: #3030ff; letter-spacing: -.5px; }
.wm-big {
  font-family: "Noto Sans CJK SC", sans-serif;
  font-weight: 900;
  stroke: #e8e8d8;
  stroke-width: 3px;
  paint-order: stroke;
  stroke-linejoin: round;
}
.wm-3d { font-size: 50px; fill: #3a86ae; letter-spacing: -2px; }
.wm-cn { font-size: 47px; fill: #79b79b; }
.wm-url {
  font: 700 15px "Liberation Sans", sans-serif;
  fill: #63a8b0;
  stroke: #dfe8e0;
  stroke-width: 2.5px;
  paint-order: stroke;
  letter-spacing: 4px;
}

/* dialog window */
.dialog {
  position: absolute;
  left: 284px;
  top: 40px;
  width: 290px;
  height: 739px;
  display: flex;
  flex-direction: column;
  background: linear-gradient(#eeeeee, #e6e6e6 60%, #ebebeb);
  border-right: 1px solid #888;
  border-bottom: 4px solid #111;
  border-left: 1px solid #555;
  border-radius: 8px 8px 0 0;
}
.titlebar {
  display: flex;
  align-items: center;
  flex: none;
  height: 22px;
  margin: 0 -1px;
  background: linear-gradient(#2a2a2a, #1a1a1a 40%, #111);
  border-radius: 8px 8px 0 0;
  color: #fff;
}
.gear { margin-left: 4px; }
.dlg-title {
  flex: 1;
  height: 21px;
  margin-left: 4px;
  padding-left: 8px;
  border-left: 1px solid #777;
  font-weight: 700;
  font-size: 14px;
  line-height: 18px;
}
.close {
  display: flex;
  align-items: center;
  justify-content: center;
  width: 21px;
  height: 21px;
  background: transparent;
  border: 0;
  border-left: 1px solid #777;
}

.listbox {
  display: grid;
  grid-template-columns: 1fr 16px;
  grid-template-rows: 74px 1fr;
  flex: none;
  width: 267px;
  height: 92px;
  margin: 8px 0 0 11px;
  background: #fff;
  border: 1px solid #7c7c7c;
}
.lines { padding-top: 1px; overflow: hidden; white-space: nowrap; }
.line { height: 12px; line-height: 12px; padding-left: 1px; color: #111; }
.line-sel { background: #3399ff; color: #e8f4ff; }
.vbar { display: flex; flex-direction: column; align-items: center; background: #f0f0f0; padding-top: 7px; }
.arrow-up { display: block; border: 4px solid transparent; border-bottom: 4px solid #555; border-top: 0; }
.arrow-down { display: block; margin-top: 17px; border: 4px solid transparent; border-top: 4px solid #555; border-bottom: 0; }
.vthumb {
  display: flex;
  flex-direction: column;
  justify-content: center;
  align-items: center;
  gap: 1px;
  width: 14px;
  height: 18px;
  margin-top: 5px;
  border: 1px solid #999;
  background: linear-gradient(90deg, #f0f0f0, #c4c4c4);
  border-radius: 2px;
}
.vthumb i { display: block; width: 8px; height: 1px; background: #666; }
.hbar {
  grid-column: 1 / 3;
  display: flex;
  align-items: center;
  background: #f0f0f0;
  padding: 0 4px 0 6px;
}
.arrow-left { display: block; border: 4px solid transparent; border-right: 4px solid #444; border-left: 0; }
.hbar-thumb {
  display: flex;
  justify-content: center;
  align-items: center;
  width: 137px;
  height: 14px;
  margin-left: 6px;
  border: 1px solid #999;
  border-radius: 2px;
  background: linear-gradient(#f0f0f0, #d4d4d4 50%, #b8b8b8);
}
.arrow-right { display: block; margin-left: auto; border: 4px solid transparent; border-left: 4px solid #444; border-right: 0; margin-right: 8px; }

.s-val { flex: none; height: 18px; line-height: 18px; font-family: "Liberation Sans", sans-serif; }
.s-val-2 { margin-left: 44px; }
.s-val-10 { height: 17px; line-height: 15px; margin-left: 261px; }
.track {
  flex: none;
  width: 253px;
  height: 22px;
  margin-left: 17px;
  padding-top: 2px;
  background: linear-gradient(transparent 9px, #8c8c8c 9px, #8c8c8c 10px, #d4d4d4 10px, #d4d4d4 12px, transparent 12px);
  border-radius: 2px;
}
.knob {
  display: block;
  width: 9px;
  height: 18px;
  border: 1px solid #667;
  border-radius: 5px 5px 2px 2px;
  background: linear-gradient(#f4fbff, #b8e4fa 40%, #5cc0f0);
}
.knob-a { margin-left: 28px; }
.knob-b { margin-left: 244px; }
.s-range { display: flex; justify-content: space-between; flex: none; width: 264px; height: 16px; margin-left: 15px; line-height: 14px; font-family: "Liberation Sans", sans-serif; font-size: 13px; }
.feed { flex: none; height: 20px; margin: 1px 0 0 9px; line-height: 18px; white-space: nowrap; }
.feed-num { margin-left: 6px; }

.tabs { display: flex; flex: none; height: 19px; margin-left: 9px; gap: 1px; position: relative; z-index: 1; }
.tab {
  display: flex;
  align-items: center;
  justify-content: center;
  gap: 3px;
  width: 51px;
  height: 19px;
  white-space: pre;
  border: 1px solid #8a8a8a;
  border-radius: 3px 3px 0 0;
  background: linear-gradient(#f2f2f2, #d0d0d0);
}
.tab-on { height: 20px; padding-bottom: 3px; border-color: #ccc; border-bottom: 0; background: #ececec; font-size: 13px; }
.tabpanel {
  flex: none;
  width: 266px;
  height: 364px;
  margin-left: 10px;
  padding: 4px 8px 0 4px;
  background: #e9e9e9;
  border: 1px solid #9a9a9a;
  border-bottom: 2px solid #a8a8a8;
}
.p-row { display: flex; align-items: center; white-space: pre; }
.p-h1 { height: 20px; }
.p-sel, .p-sel2, .p-num { justify-content: space-between; }
.p-sel { height: 19px; margin-bottom: 2px; }
.p-chk { height: 22px; }
.off { color: #9a9a9a; }
.cb {
  display: block;
  flex: none;
  width: 16px;
  height: 16px;
  margin-right: 1px;
  border: 1px solid #bcbcbc;
  border-radius: 3px;
  background: linear-gradient(#ececec, #dcdcdc);
}
.rule { height: 1px; margin: 1px 0 0; background: #c0c0c0; border-bottom: 1px solid #f4f4f4; box-sizing: content-box; }
.p-h2 { height: 21px; }
.p-sel2 { height: 20px; }
.p-num { height: 20px; }
.select {
  display: flex;
  align-items: center;
  height: 19px;
  padding-left: 3px;
  background: #fff;
  border: 1px solid #555;
  border-radius: 4px;
  color: #000;
  position: relative;
}
.sel-a { width: 49px; }
.sel-b { width: 97px; height: 18px; }
.sel-btn {
  display: block;
  position: absolute;
  right: 0; top: 0; bottom: 0;
  width: 17px;
  background: linear-gradient(#bcd8f8, #3f8fe0);
  border-left: 1px solid #888;
  border-radius: 0 3px 3px 0;
}
.sel-btn::after {
  content: "";
  position: absolute;
  left: 3px;
  top: 4px;
  border: 5px solid transparent;
  border-top: 7px solid #111;
  border-bottom: 0;
}
.numbox {
  display: block;
  width: 57px;
  height: 18px;
  padding-right: 4px;
  text-align: right;
  line-height: 16px;
  color: #777;
  background: #cfcfcf;
  border: 1px solid #b4b4b4;
  border-radius: 3px;
}
.wide-btn {
  display: block;
  width: 252px;
  height: 22px;
  margin: 4px 0 0 1px;
  border: 1px solid #666;
  border-radius: 4px;
  background: linear-gradient(#f6f6f6, #d4d4d4 50%, #a8a8a8 60%, #d8d8d8);
  line-height: 18px;
}
.speed-label { flex: none; height: 18px; margin: 3px 0 0 9px; line-height: 18px; }
.player { display: flex; flex: none; gap: 4px; height: 30px; margin: 3px 0 0 27px; }
.pbtn {
  display: flex;
  align-items: center;
  justify-content: center;
  width: 30px;
  height: 30px;
  border: 1px solid #666;
  border-radius: 4px;
  outline: 1px solid #999;
  outline-offset: -2px;
  background: linear-gradient(#f4f4f4, #e6e6e6 35%, #cfcfcf 45%, #eeeeee);
}
.pbtn-off { border-color: #bbb; outline-color: #ddd; }
.rule-b { flex: none; height: 1px; margin: 8px 9px 0 5px; background: #bebebe; border-bottom: 1px solid #f8f8f8; box-sizing: content-box; }
.actions { display: flex; flex: none; gap: 7px; margin: 4px 0 0 161px; }
.act {
  width: 52px;
  height: 18px;
  line-height: 15px;
  border: 1px solid #666;
  border-radius: 3px;
  background: linear-gradient(#f4f4f4, #c8c8c8 55%, #e4e4e4);
}
.act-ok { background: linear-gradient(#f0fff0, #b8e8a8 45%, #64c84c); border-color: #3e7a3a; }
```
